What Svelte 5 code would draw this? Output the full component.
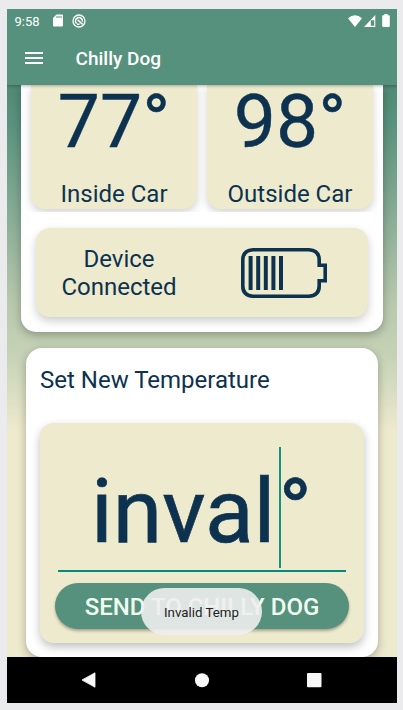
<script>
  const readings = [
    { value: '77°', label: 'Inside Car' },
    { value: '98°', label: 'Outside Car' }
  ];
  const bars = [0, 1, 2, 3, 4];
</script>

<div class="page">
  <div class="screen">
    <header>
      <div class="status">
        <span class="time">9:58</span>
        <svg class="sd" width="10" height="13" viewBox="0 0 10 13"><path fill="#fff" fill-rule="evenodd" d="M3.5 .5H9q1 0 1 1v10q0 1-1 1H1q-1 0-1-1V4zM3.5 2v2h1V2zM5.5 2v2h1V2zM7.5 2v2h1V2z" /></svg>
        <svg class="ring" width="14" height="14" viewBox="0 0 14 14" fill="none" stroke="#fff"><circle cx="7" cy="7" r="6" stroke-width="1.3" /><path stroke-width="1.5" d="M4.6 9.6A3.5 3.5 0 1 1 10.4 7.6M5.6 5.8l5 4.6M5 10.2h2.6" /></svg>
        <span class="grow"></span>
        <svg class="wifi" width="14" height="12" viewBox="0 0 14 12"><path fill="#fff" d="M0 3.2Q7-2.8 14 3.2L7 12z" /></svg>
        <svg class="cell" width="12" height="12" viewBox="0 0 12 12"><path fill="#fff" fill-rule="evenodd" d="M11.3 0v12H0zM10.2 5.2H6.8v5.6h3.4z" /></svg>
        <svg class="batt" width="8" height="13" viewBox="0 0 8 13"><path fill="#fff" d="M2.3 0h3.4v1.3H7q.8 0 .8.8v10q0 .8-.8.8H1q-.8 0-.8-.8v-10q0-.8.8-.8h1.3z" /></svg>
      </div>
      <div class="toolbar">
        <svg width="18" height="12" viewBox="0 0 18 12"><path fill="#fff" d="M0 0h18v2H0zM0 5h18v2H0zM0 10h18v2H0z" /></svg>
        <h1>Chilly Dog</h1>
      </div>
    </header>

    <main>
      <section class="overview">
        <div class="temps">
          {#each readings as r}
            <div class="tile">
              <div class="value">{r.value}</div>
              <div class="label">{r.label}</div>
            </div>
          {/each}
        </div>
        <div class="device">
          <div class="state">Device<br />Connected</div>
          <svg width="87" height="50" viewBox="0 0 87 50" fill="none" stroke="#0c324f">
            <path stroke-width="3.6" d="M12 1.8H68Q78.2 2.5 78.2 12V17.3H84.2V32.7H78.2V38Q78.2 47.5 68 48.2H12Q1.8 47.5 1.8 38V12Q1.8 2.5 12 1.8Z" />
            {#each bars as b}
              <path stroke-width="4" d="M{9.6 + b * 7.6} 8v34" />
            {/each}
          </svg>
        </div>
      </section>

      <section class="setter">
        <h2>Set New Temperature</h2>
        <div class="panel">
          <div class="entry"><span class="typed">inval</span><i class="caret"></i><span class="degree">°</span></div>
          <div class="send">SEND TO CHILLY DOG</div>
        </div>
      </section>
    </main>

    <div class="toast">Invalid Temp</div>

    <nav>
      <svg width="390" height="46" viewBox="0 0 390 46" fill="#f8f8f8"><path d="M88 15.8v14.4L75 23z" stroke="#f8f8f8" stroke-width=".8" stroke-linejoin="round" /><circle cx="195" cy="23.2" r="7" /><rect x="300" y="16" width="14.5" height="14.3" rx="1" /></svg>
    </nav>
  </div>
</div>

<style>
  .page {
    box-sizing: border-box;
    width: 403px;
    height: 710px;
    padding: 9px 6px 7px 7px;
    overflow: hidden;
    background: #ebebed;
    color: #0c324f;
    font-family: Roboto, sans-serif;
  }
  .page * { box-sizing: border-box; }
  .screen {
    position: relative;
    display: flex;
    flex-direction: column;
    width: 390px;
    height: 694px;
    overflow: hidden;
  }
  header {
    position: relative;
    z-index: 1;
    flex: none;
    height: 76px;
    background: #56917e;
    box-shadow: 0 1px 3px rgba(0, 0, 0, .3);
    color: #fff;
  }
  .status {
    display: flex;
    align-items: center;
    height: 23px;
    padding: 0 7px 0 7.5px;
    font-size: 13px;
  }
  .time { width: 38.5px; padding-top: 1px; white-space: nowrap; }
  .ring { margin-left: 9px; }
  .grow { flex: 1; }
  .cell { margin-left: 2px; }
  .batt { margin-left: 6px; }
  .toolbar {
    display: flex;
    align-items: center;
    height: 53px;
    padding: 0 18px 1px;
  }
  h1 { margin: 2px 0 0 32.5px; font-size: 19px; line-height: 24px; font-weight: 500; }
  main {
    flex: none;
    height: 572px;
    overflow: hidden;
    background: linear-gradient(#508a75 0, #5a937f 40px, #85ab94 125px, #b9c9ae 220px, #c5d2b6 270px, #eeeace 347px);
  }
  .overview {
    height: 247px;
    margin: 0 14px;
    padding: 0 10px;
    background: #fff;
    border-radius: 0 0 15px 15px;
    box-shadow: 0 3px 10px rgba(0, 0, 0, .28);
  }
  .temps {
    display: flex;
    gap: 10px;
    height: 127px;
    margin: 0 -10px;
    padding: 0 10px;
    overflow: hidden;
  }
  .tile, .device, .panel {
    background: #eeeace;
    box-shadow: 0 3px 9px rgba(0, 0, 0, .19);
  }
  .tile {
    width: 166px;
    height: 123.5px;
    border-radius: 0 0 14px 14px;
    text-align: center;
  }
  .value { height: 95px; font-size: 75px; line-height: 72px; -webkit-text-stroke: .4px #0c324f; }
  .label { font-size: 24px; line-height: 28px; }
  .device {
    display: flex;
    align-items: center;
    height: 89px;
    margin: 16px 5px 0;
    border-radius: 14px;
    box-shadow: 0 4px 10px rgba(0, 0, 0, .2);
  }
  .state {
    width: 166px;
    margin-right: 39px;
    font-size: 24px;
    line-height: 28px;
    text-align: center;
  }
  .setter {
    height: 309px;
    margin: 16px 19px 0;
    padding: 18px 14px 0;
    border-radius: 16px;
    background: #fff;
    box-shadow: 0 3px 10px rgba(0, 0, 0, .28);
  }
  h2 { height: 57px; margin: 0; font-size: 24px; line-height: 29px; font-weight: 400; white-space: nowrap; }
  .panel {
    height: 220px;
    padding: 24px 15px 0;
    border-radius: 14px;
    box-shadow: 0 4px 10px rgba(0, 0, 0, .25);
  }
  .entry {
    display: flex;
    height: 125px;
    margin: 0 3px 11px;
    padding-left: 33px;
    border-bottom: 2px solid #07897b;
    font-size: 89.5px;
    line-height: 130px;
    -webkit-text-stroke: .7px #0c324f;
  }
  .typed { width: 188px; white-space: nowrap; }
  .caret { width: 1.5px; height: 121px; background: #17917f; }
  .degree { margin-left: -2px; }
  .send {
    width: 294px;
    height: 46px;
    border-radius: 23px;
    background: #56917e;
    box-shadow: 0 2px 3px rgba(0, 0, 0, .3);
    color: #f1fff0;
    font-size: 24px;
    font-weight: 500;
    line-height: 48px;
    text-align: center;
    white-space: nowrap;
  }
  .toast {
    position: absolute;
    z-index: 2;
    left: 134px;
    top: 579px;
    width: 121px;
    height: 47px;
    border-radius: 23.5px;
    background: rgba(238, 238, 238, .9);
    color: #222;
    font-size: 13.3px;
    line-height: 49px;
    text-align: center;
  }
  nav { flex: none; height: 46px; background: #000; }
  svg { display: block; flex: none; }
</style>
